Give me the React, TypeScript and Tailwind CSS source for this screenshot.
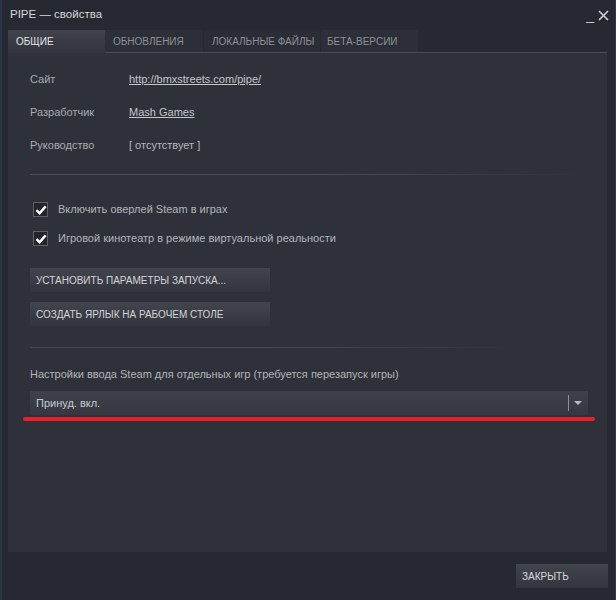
import React from "react";

const font = { fontFamily: '"Liberation Sans", Arial, sans-serif' };

function Check() {
  return (
    <div className="w-[15px] h-[15px] border border-[#5e6169] bg-[#22252c] flex items-center justify-center">
      <svg width="12" height="12" viewBox="0 0 12 12">
        <path d="M1.5 6.2 L4.6 9.2 L10.6 2.4" stroke="#ffffff" strokeWidth="2.4" fill="none" strokeLinejoin="miter" />
      </svg>
    </div>
  );
}

function Btn({ children, w }: { children: React.ReactNode; w: string }) {
  return (
    <div className={`${w} h-[24px] flex items-center pl-[6px] text-[10px] whitespace-nowrap text-[#d4d5d7] bg-gradient-to-b from-[#42454e] to-[#32353e]`}>
      {children}
    </div>
  );
}

export default function App() {
  return (
    <div style={font} className="w-[616px] h-[600px] bg-[#262931] flex flex-col border-l-2 border-[#2b3344] border-r border-r-[#343842] overflow-hidden">
      {/* title bar */}
      <div className="h-[30px] flex items-center justify-between pl-[8px] pr-[6px]">
        <span className="text-[11.5px] text-[#d6d7d9]">PIPE — свойства</span>
        <div className="flex items-end gap-[4px] text-[#c9cacd]">
          <span className="text-[14px] leading-none mb-[1px]">_</span>
          <svg width="11" height="11" viewBox="0 0 11 11" className="mb-[2px]">
            <path d="M1 1 L10 10 M10 1 L1 10" stroke="#d0d1d4" strokeWidth="1.6" />
          </svg>
        </div>
      </div>
      {/* tabs */}
      <div className="h-[23px] flex ml-[6px] mr-[8px] text-[10px] whitespace-nowrap">
        <div className="w-[97px] h-full flex items-center pl-[8px] text-[#e6e7e9] bg-gradient-to-b from-[#41444d] to-[#31343d]">ОБЩИЕ</div>
        <div className="flex-1 flex border-b border-[#4a4d55]">
          <div className="w-[98px] h-full flex items-center pl-[8px] text-[#8e9198] bg-[#2c2f37]">ОБНОВЛЕНИЯ</div>
          <div className="w-[117px] h-full flex items-center pl-[8px] text-[#8e9198] bg-[#2a2d35] border-l border-[#262931]">ЛОКАЛЬНЫЕ ФАЙЛЫ</div>
          <div className="w-[98px] h-full flex items-center pl-[6px] text-[#8e9198] bg-[#2c2f37] border-l border-[#262931]">БЕТА-ВЕРСИИ</div>
        </div>
      </div>
      {/* panel */}
      <div className="mx-[6px] mr-[8px] h-[499px] bg-[#2e3139] pl-[22px] pr-[19px] pt-[10px] flex flex-col text-[11px]">
        <div className="h-[33px] flex items-center">
          <span className="w-[99px] text-[#a9abb0]">Сайт</span>
          <span className="text-[#c5c7cb] underline">http://bmxstreets.com/pipe/</span>
        </div>
        <div className="h-[33px] flex items-center">
          <span className="w-[99px] text-[#a9abb0]">Разработчик</span>
          <span className="text-[#c5c7cb] underline">Mash Games</span>
        </div>
        <div className="h-[33px] flex items-center">
          <span className="w-[99px] text-[#a9abb0]">Руководство</span>
          <span className="text-[#b6b8bc]">[ отсутствует ]</span>
        </div>
        <div className="mt-[12px] h-px w-[556px] bg-gradient-to-r from-[#4a4d56] via-[#4c4f58] to-[#2e3139]" />
        <div className="mt-[20px] h-[29px] flex items-center pl-[3px] gap-[10px]">
          <Check />
          <span className="text-[#b3b5ba]">Включить оверлей Steam в играх</span>
        </div>
        <div className="h-[29px] flex items-center pl-[3px] gap-[10px]">
          <Check />
          <span className="text-[#b3b5ba]">Игровой кинотеатр в режиме виртуальной реальности</span>
        </div>
        <div className="mt-[15px]">
          <Btn w="w-[240px]">УСТАНОВИТЬ ПАРАМЕТРЫ ЗАПУСКА...</Btn>
        </div>
        <div className="mt-[10px]">
          <Btn w="w-[240px]">СОЗДАТЬ ЯРЛЫК НА РАБОЧЕМ СТОЛЕ</Btn>
        </div>
        <div className="mt-[21px] h-px w-[490px] bg-gradient-to-r from-[#474a53] via-[#484b54] to-[#2e3139]" />
        <div className="mt-[19px] h-[14px] flex items-center text-[#b3b5ba]">
          Настройки ввода Steam для отдельных игр (требуется перезапуск игры)
        </div>
        <div className="relative mt-[10px]">
          <div className="h-[24px] flex items-center justify-between bg-gradient-to-b from-[#3e414a] to-[#353841]">
            <span className="pl-[6px] text-[#c9cbcf]">Принуд. вкл.</span>
            <div className="flex items-center h-full">
              <div className="w-px h-[16px] bg-[#8c8f96]" />
              <svg width="19" height="8" viewBox="0 0 19 8">
                <path d="M5 2 L13 2 L9 6 Z" fill="#b8babf" />
              </svg>
            </div>
          </div>
          <div className="absolute left-[-7px] right-[-7px] bottom-[-6px] h-[4px] rounded-full bg-[#e8202c]" />
        </div>
      </div>
      {/* bottom */}
      <div className="flex-1 flex justify-end items-start pt-[12px] pr-[7px]">
        <div className="w-[92px] h-[24px] flex items-center pl-[6px] text-[10px] text-[#d8d9db] bg-gradient-to-b from-[#42454e] to-[#32353e]">
          ЗАКРЫТЬ
        </div>
      </div>
    </div>
  );
}
